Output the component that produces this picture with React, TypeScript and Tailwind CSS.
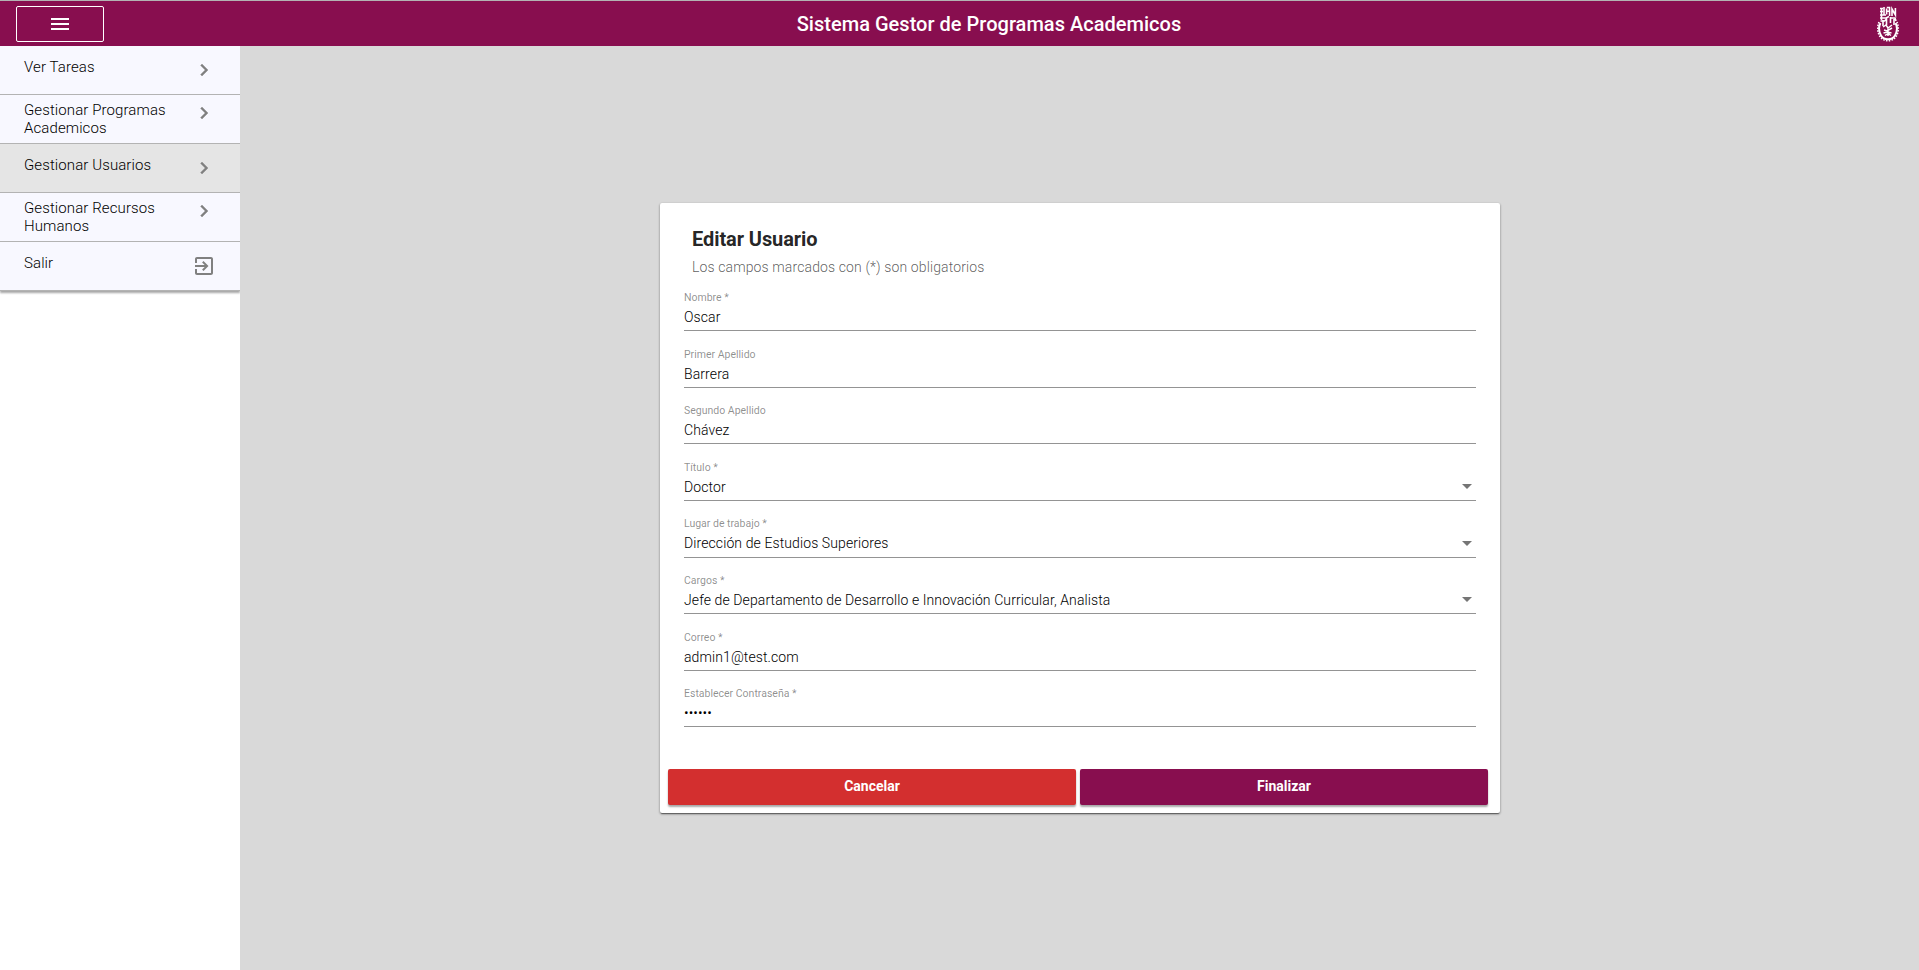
import React from "react";

const menu = [
  { label: "Ver Tareas", lines: 1 },
  { label: "Gestionar Programas Academicos", lines: 2 },
  { label: "Gestionar Usuarios", lines: 1, active: true },
  { label: "Gestionar Recursos Humanos", lines: 2 },
  { label: "Salir", lines: 1, exit: true },
];

const fields = [
  { label: "Nombre *", value: "Oscar" },
  { label: "Primer Apellido", value: "Barrera" },
  { label: "Segundo Apellido", value: "Chávez" },
  { label: "Título *", value: "Doctor", select: true },
  { label: "Lugar de trabajo *", value: "Dirección de Estudios Superiores", select: true },
  { label: "Cargos *", value: "Jefe de Departamento de Desarrollo e Innovación Curricular, Analista", select: true },
  { label: "Correo *", value: "admin1@test.com" },
  { label: "Establecer Contraseña *", value: "••••••" },
];

function Crest() {
  return (
    <svg className="h-[38px] w-[22px]" viewBox="0 0 22 38" fill="none" stroke="#fff">
      <path d="M3.4 18C1.5 22 2 27 4 30.5c3 5 11 5 14 0 2-3.500 2.500-8.500.6-12.500" strokeWidth="2" />
      <path d="M2 17c-2 5-1.600 10.500 1 14.600 3.600 5.500 12.400 5.500 16 0 2.600-4.100 3-9.600 1-14.600" strokeWidth="1.600" strokeDasharray="1.500 1.300" />
      <path d="M4.500 3v12M7 2v8M9.600 3.500v6M9.800 2.500h2.700v3.800H9.800M12.600 6v5M15 11V4l3.400 6V3M3 3.500h3M3 6.500h3M3 10h6" strokeWidth="1.600" />
      <path d="M3 13h6l3-1.500M3.500 16h4l2-2M14 13h4l1 3M6 15v6M9.500 13v7M13.500 12v6M17 14v6" strokeWidth="1.600" />
      <path d="M6 22l3-2 2 3 4-3M7 25l3 1 5-3M6.500 28l4-1 4 1M11 23v8M8 30.500l3-2 3 2" strokeWidth="1.500" />
    </svg>
  );
}

export default function App() {
  return (
    <div className="flex h-[970px] w-full flex-col overflow-hidden border-t border-[#b3b3b3] bg-white font-['Roboto',sans-serif]">
      <header className="flex h-[45px] shrink-0 items-center bg-[#880e4f] pr-5 pl-4">
        <button className="flex h-9 w-[88px] items-center justify-center rounded-[2px] border border-white">
          <svg className="size-6" viewBox="0 0 24 24" fill="#fff">
            <path d="M3 18h18v-2H3v2zm0-5h18v-2H3v2zm0-7v2h18V6H3z" />
          </svg>
        </button>
        <h1 className="flex-1 pr-[3px] text-center text-[20px] leading-6 font-medium tracking-[0.02px] text-white">Sistema Gestor de Programas Academicos</h1>
        <Crest />
      </header>
      <div className="flex flex-1">
        <aside className="w-60 shrink-0">
          <nav className="bg-[#f8f8ff] shadow-[0_2px_2px_rgba(0,0,0,0.35)]">
            {menu.map((m) => (
              <div
                key={m.label}
                className={`flex h-[49px] justify-between border-b border-[#b3b3b3] px-6 ${m.lines === 1 ? "pt-3" : "pt-[6px]"} ${m.active ? "bg-[#e5e5e5]" : ""}`}
              >
                <span className="w-[160px] text-[15px] leading-[18px] font-light tracking-[0.1px] text-black">{m.label}</span>
                <svg className="size-6 shrink-0" viewBox="0 0 24 24" fill="#808080">
                  {m.exit ? (
                    <path d="M10.09 15.59L11.5 17l5-5-5-5-1.41 1.41L12.67 11H3v2h9.67l-2.58 2.59zM19 3H5c-1.11 0-2 .9-2 2v4h2V5h14v14H5v-4H3v4c0 1.1.89 2 2 2h14c1.1 0 2-.9 2-2V5c0-1.1-.9-2-2-2z" />
                  ) : (
                    <path d="M10 6L8.59 7.41 13.17 12l-4.58 4.59L10 18l6-6z" stroke="#808080" strokeWidth="0.4" />
                  )}
                </svg>
              </div>
            ))}
          </nav>
        </aside>
        <main className="flex flex-1 justify-center bg-[#d9d9d9] pt-[157px]">
          <form className="h-[610px] w-[840px] rounded-[2px] bg-white pt-6 shadow-[0_2px_1px_-1px_rgba(0,0,0,0.35),0_1px_2px_rgba(0,0,0,0.3),0_1px_3px_rgba(0,0,0,0.2)]">
            <h2 className="pl-[32.5px] text-[20px] leading-6 font-bold tracking-[-0.08px] text-black/87">Editar Usuario</h2>
            <p className="mt-[6px] pl-[32.5px] text-[14px] leading-5 font-light tracking-[0.12px] text-black/65">Los campos marcados con (*) son obligatorios</p>
            <div className="-mt-[2.4px] px-6">
              {fields.map((f) => (
                <div key={f.label} className="flex h-[56.6px] flex-col justify-end border-b border-[#949494]">
                  <div className="pl-[0.5px] text-[10.5px] leading-3 text-black/45">{f.label}</div>
                  <div className="mt-[5px] mb-[5.2px] flex h-4 items-center justify-between pl-[0.5px] text-[14px] leading-4 font-light tracking-[0.1px] text-black">
                    <span>{f.value}</span>
                    {f.select && (
                      <svg className="mr-1 h-[5px] w-[10px]" viewBox="0 0 10 5" fill="#757575">
                        <path d="M0 0h10L5 5z" />
                      </svg>
                    )}
                  </div>
                </div>
              ))}
            </div>
            <div className="mt-[41.6px] flex gap-1 pr-3 pl-2 text-[14px] font-bold text-white">
              <button type="button" className="h-9 flex-1 rounded-[2px] bg-[#d32f2f] pb-px pl-px shadow-[0_2px_2px_rgba(0,0,0,0.35)]">Cancelar</button>
              <button type="button" className="h-9 flex-1 rounded-[2px] bg-[#880e4f] pb-px pl-px shadow-[0_2px_2px_rgba(0,0,0,0.35)]">Finalizar</button>
            </div>
          </form>
        </main>
      </div>
    </div>
  );
}
